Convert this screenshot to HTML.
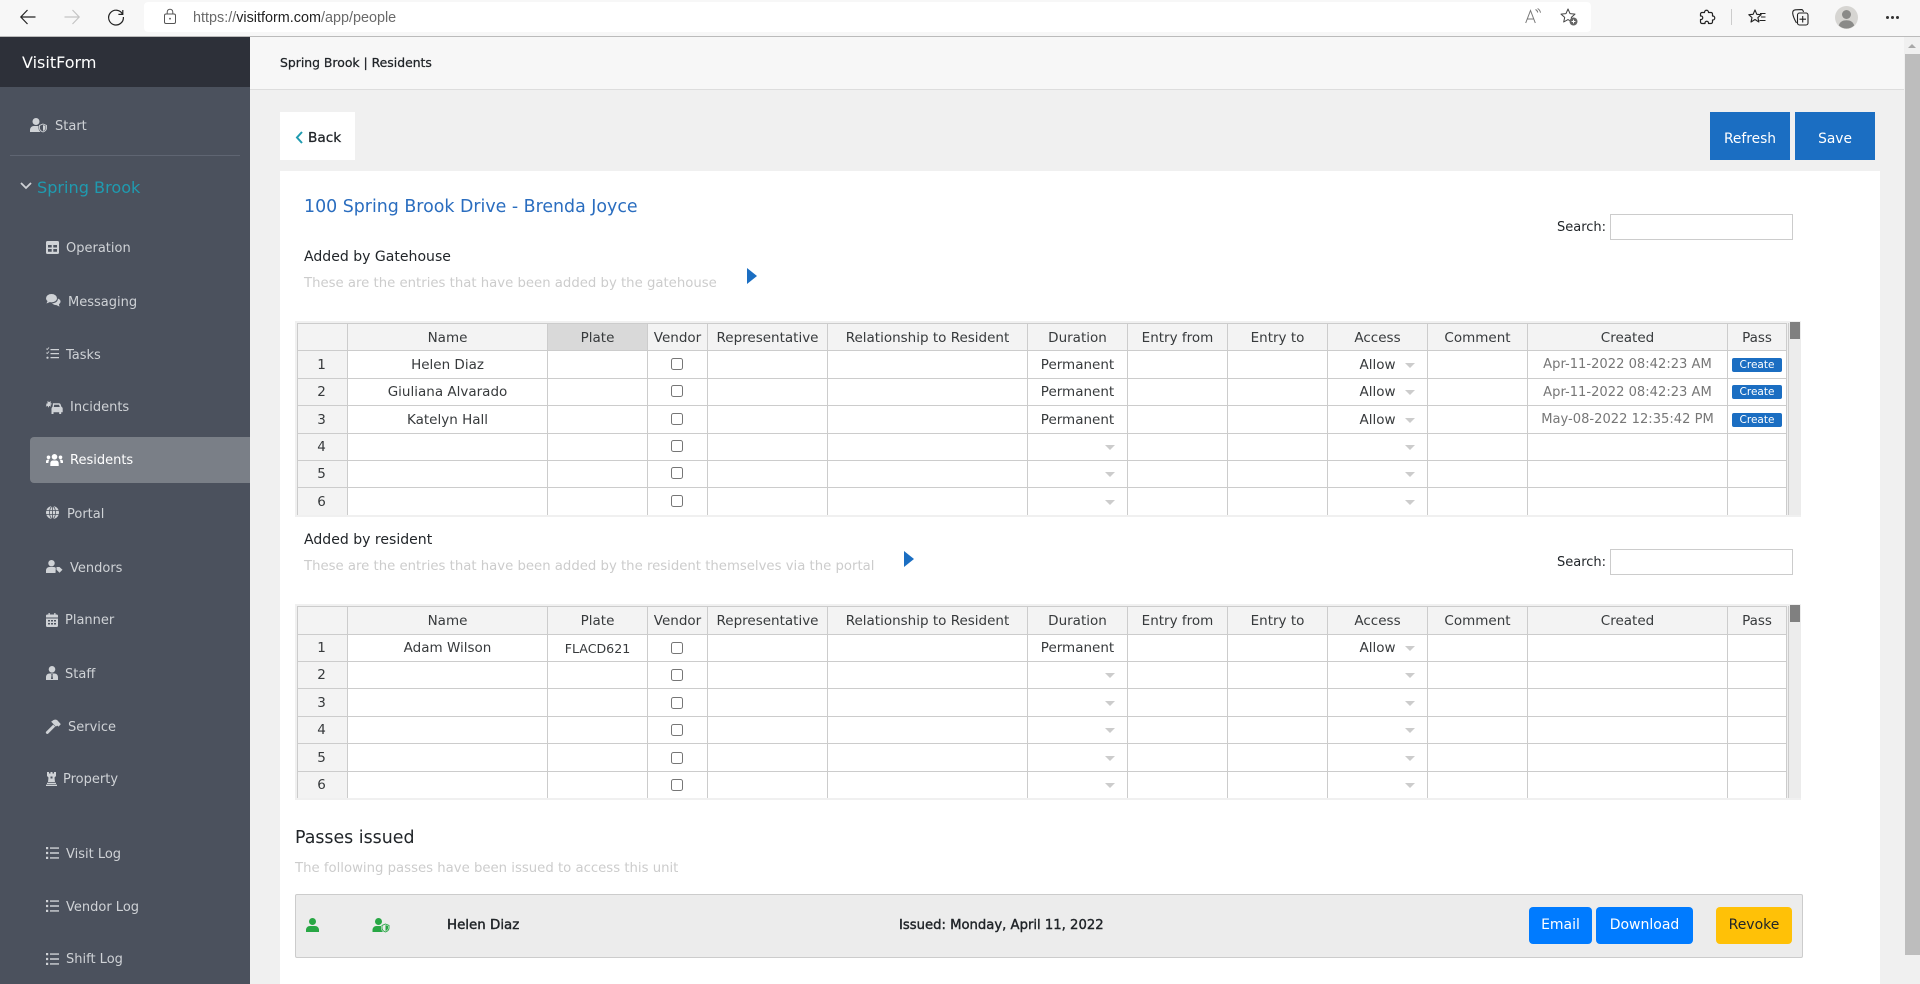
<!DOCTYPE html>
<html lang="en"><head><meta charset="utf-8"><title>VisitForm</title>
<style>
*{box-sizing:border-box}
html,body{margin:0;padding:0;width:1920px;height:984px;overflow:hidden;background:#f0f0f0;font-family:"DejaVu Sans","Liberation Sans",sans-serif;font-size:13px;color:#212529}
.b{position:absolute}
.t{position:absolute;white-space:nowrap;line-height:20px;height:20px;margin-top:1px}
svg{position:absolute;overflow:visible}
.s{color:#cfd2d6}
table{position:absolute;left:297px;width:1490px;table-layout:fixed;border-collapse:separate;border-spacing:0}
td,th{border-right:1px solid #ccc;border-bottom:1px solid #ccc;padding:0;text-align:center;font-weight:400;font-size:13.5px;color:#373a3c;overflow:hidden;position:relative;white-space:nowrap;background:#fff}
th{background:#f3f3f3}
tr:first-child th{border-top:1px solid #ccc;padding-top:1px}
tr th:first-child{border-left:1px solid #ccc;padding-right:2px}
tr:last-child td,tr:last-child th{border-bottom:0}
th.hl{background:#d9d9d9}
td input{margin:auto;width:12px;height:12px;display:block;position:relative;left:-1px}
.t1 td input{top:-1px}
i{position:absolute;right:12px;top:50%;margin-top:-2px;width:0;height:0;border-left:5px solid transparent;border-right:5px solid transparent;border-top:5px solid #ccc}
td.c{color:#777;font-size:13.1px}
.k{display:block;width:50px;height:14px;line-height:14px;margin-left:4px;background:#1b6ec2;color:#fff;font-size:10.5px;border-radius:2px}
.d{color:#ccc;font-size:13.25px}
.m{-webkit-text-stroke:.25px currentColor}
.bt{position:absolute;text-align:center;color:#fff;background:#1b6ec2}
.bs{position:absolute;top:907px;height:37px;line-height:37px;border-radius:4px;background:#007bff;color:#fff;text-align:center;font-size:14px}
.in{position:absolute;left:1610px;width:183px;height:26px;border:1px solid #ccc;background:#fff}
</style></head><body>

<!-- browser chrome -->
<div class="b" style="left:0;top:0;width:1920px;height:37px;background:#f7f7f7;border-bottom:1px solid #bbb"></div>
<div class="b" style="left:144px;top:2px;width:1447px;height:30px;background:#fff;border-radius:4px"></div>
<svg style="left:20px;top:9px" width="16" height="16" viewBox="0 0 16 16" fill="none" stroke="#222" stroke-width="1.2"><path d="M15.5 8H.8M7.5 1L.8 8l6.7 7"/></svg>
<svg style="left:64px;top:9px" width="16" height="16" viewBox="0 0 16 16" fill="none" stroke="#c4c4c4" stroke-width="1.2"><path d="M.5 8h14.7M8.5 1l6.7 7-6.7 7"/></svg>
<svg style="left:108px;top:9px" width="16" height="16" viewBox="0 0 16 16" fill="none" stroke="#222" stroke-width="1.2"><path d="M14.6 5.2A7.4 7.4 0 1 0 15.4 8M14.8 1v4.4h-4.4"/></svg>
<svg style="left:164px;top:9px" width="12" height="15" viewBox="0 0 12 15" fill="none" stroke="#555" stroke-width="1"><rect x=".5" y="5" width="11" height="9.5" rx="1.5"/><path d="M3.2 5V3a2.8 2.8 0 0 1 5.6 0v2"/><circle cx="6" cy="9.7" r=".9" fill="#555" stroke="none"/></svg>
<div class="t" style="left:193px;top:7px;font-family:'Liberation Sans',sans-serif;font-size:14.4px;color:#6a6a6a">https://<span style="color:#222">visitform.com</span>/app/people</div>
<svg style="left:1525px;top:8px" width="17" height="16" viewBox="0 0 17 16" fill="none" stroke="#777" stroke-width="1"><path d="M.7 15L5.5 2.5 10.3 15M2.4 11h6.2M10.5 1.5c1.2.6 2 1.6 2.2 3M12.6.5c1.6.9 2.6 2.4 2.9 4.2"/></svg>
<svg style="left:1560px;top:8px" width="18" height="18" viewBox="0 0 18 18" fill="none" stroke="#444" stroke-width="1"><path d="M8 1l2 4.6 5 .5-3.7 3.3 1 4.600L8 11.600 3.700 14l1-4.600L1 6.100l5-.5z" stroke-linejoin="round"/><circle cx="13.500" cy="13.500" r="4" fill="#666" stroke="none"/><path d="M11.600 13.500h3.800M13.500 11.600v3.800" stroke="#fff"/></svg>
<svg style="left:1699px;top:9px" width="16" height="17" viewBox="0 0 16 17" fill="none" stroke="#222" stroke-width="1.2"><path d="M5.500 3.500c0-3 4-3 4 0h2.500a1.500 1.500 0 0 1 1.500 1.500v2c3-.5 3 4.500 0 4v2a1.500 1.500 0 0 1-1.500 1.500H9.500c.5-3-4-3-3.500 0H3a1.500 1.500 0 0 1-1.500-1.500v-2.500c3 .5 3-4 0-3.500V5A1.500 1.500 0 0 1 3 3.500z" stroke-linejoin="round"/></svg>
<div class="b" style="left:1731px;top:9px;width:1px;height:16px;background:#ccc"></div>
<svg style="left:1748px;top:9px" width="18" height="16" viewBox="0 0 18 16" fill="none" stroke="#222" stroke-width="1.100"><path d="M7 1l1.800 4.300 4.400.4-3.300 2.900 1 4.400L7 10.500 3 13l1-4.400L.8 5.700l4.300-.4z" stroke-linejoin="round"/><path d="M12 4.500h5.500M13 8h4.500M11.500 11.500h6"/></svg>
<svg style="left:1792px;top:9px" width="17" height="17" viewBox="0 0 17 17" fill="none" stroke="#222" stroke-width="1.100"><path d="M4.500 14C2.500 10.500 1 7 .7 4.300.5 2 2 1 3.500.8L9.500.6c1 0 1.600.8 2 2.400"/><rect x="5.500" y="4" width="10.500" height="12" rx="2" fill="#f7f7f7"/><path d="M10.700 7v6.500M7.500 10.200h6.500"/></svg>
<svg style="left:1835px;top:6px" width="23" height="23" viewBox="0 0 23 23"><circle cx="11.500" cy="11.500" r="11.500" fill="#d6d5d2"/><circle cx="11.500" cy="8.500" r="4.500" fill="#8a8a88"/><path d="M3.800 19.500c1-3.700 4-5.200 7.700-5.200s6.700 1.500 7.700 5.200a11.500 11.500 0 0 1-15.400 0z" fill="#8a8a88"/></svg>
<div class="b" style="left:1886px;top:16px;width:3px;height:3px;border-radius:50%;background:#333"></div>
<div class="b" style="left:1891px;top:16px;width:3px;height:3px;border-radius:50%;background:#333"></div>
<div class="b" style="left:1896px;top:16px;width:3px;height:3px;border-radius:50%;background:#333"></div>

<!-- scrollbar -->
<div class="b" style="left:1905px;top:37px;width:15px;height:947px;background:#f0f0f0"></div>
<div class="b" style="left:1905px;top:54px;width:15px;height:901px;background:#bdbdbd"></div>
<div class="b" style="left:1908px;top:44px;width:0;height:0;border-left:4px solid transparent;border-right:4px solid transparent;border-bottom:4px solid #a8a8a8"></div>

<!-- sidebar -->
<div class="b" style="left:0;top:37px;width:250px;height:947px;background:#4b515d"></div>
<div class="b" style="left:0;top:37px;width:250px;height:50px;background:#2d3039"></div>
<div class="t" style="left:22px;top:52px;font-size:16px;color:#fff">VisitForm</div>
<div class="b" style="left:10px;top:155px;width:230px;height:1px;background:#5f6572"></div>
<div class="b" style="left:30px;top:437px;width:220px;height:46px;background:#7a7f87;border-radius:4px 0 0 4px"></div>

<svg style="left:30px;top:118px" width="17" height="14" viewBox="0 0 17 14" fill="#cfd2d6"><circle cx="6" cy="3.500" r="3.500"/><path d="M0 14v-2c0-2.300 1.800-4 4-4h4c.9 0 1.700.3 2.300.8V14z"/><path d="M13 6l3.500 1.400v2.700c0 1.900-1.400 3.100-3.500 3.900-2.100-.8-3.500-2-3.500-3.900V7.400z" fill="#4b515d" stroke="#4b515d" stroke-width="2"/><path d="M13 6l3.500 1.400v2.700c0 1.900-1.400 3.100-3.500 3.900-2.100-.8-3.500-2-3.500-3.900V7.400z" fill="#4b515d" stroke="#cfd2d6" stroke-width=".9"/><path d="M13 7v6c1.500-.7 2.500-1.600 2.500-2.900V8z"/></svg>
<div class="t s" style="left:55px;top:116px">Start</div>
<svg style="left:20px;top:182px" width="12" height="8" viewBox="0 0 12 8" fill="none" stroke="#cfd2d6" stroke-width="1.800"><path d="M1 1l5 5 5-5"/></svg>
<div class="t" style="left:37px;top:177px;font-size:16.1px;color:#1f9bb0">Spring Brook</div>

<svg style="left:46px;top:241px" width="13" height="13" viewBox="0 0 13 13"><path fill="#cfd2d6" fill-rule="evenodd" d="M1.500 0h10A1.500 1.500 0 0 1 13 1.500v10a1.500 1.500 0 0 1-1.500 1.500h-10A1.500 1.500 0 0 1 0 11.500v-10A1.500 1.500 0 0 1 1.500 0zM2 4v2.500h3.700V4zm5.300 0v2.500H11V4zM2 8v2.700h3.700V8zm5.300 0v2.700H11V8z"/></svg>
<div class="t s" style="left:66px;top:238px">Operation</div>

<svg style="left:46px;top:294px" width="15" height="13" viewBox="0 0 15 13" fill="#cfd2d6"><ellipse cx="5.500" cy="4.200" rx="5.500" ry="4.200"/><path d="M1.500 7l-1 2.500L4 8z"/><path d="M11.800 4.500C12.300 7 9.500 9.300 6 9.300c1 1.200 2.600 1.800 4.500 1.800l3 1.500-.6-2.400C15.500 8.500 15 5.500 11.800 4.500z"/></svg>
<div class="t s" style="left:68px;top:292px">Messaging</div>

<svg style="left:46px;top:347px" width="13" height="13" viewBox="0 0 13 13" fill="#cfd2d6"><path d="M4.500 2h8.500v1.300H4.500zM4.500 6h8.500v1.300H4.500zM4.500 10h8.500v1.300H4.500z"/><path d="M.4 1.700l.8.800L3 .5" fill="none" stroke="#cfd2d6" stroke-width=".9"/><path d="M.4 5.700l.8.800L3 4.500" fill="none" stroke="#cfd2d6" stroke-width=".9"/><circle cx="1.500" cy="10.700" r="1.100"/></svg>
<div class="t s" style="left:66px;top:345px">Tasks</div>

<svg style="left:46px;top:400px" width="17" height="14" viewBox="0 0 17 14" fill="#cfd2d6"><path d="M2.500 0l.6 2 2-.7-.7 2 2 .6-2 .9.7 1.800-1.900-.7-.8 1.900-.8-1.900-1.800.7.700-1.800L0 3.900l1.800-.6-.7-2 1.800.7z"/><path d="M7 3.200h6c.8 0 1.400.5 1.600 1.200l.8 2.400c.9.400 1.300 1 1.300 1.900v3.500h-1.500V14h-2v-1.800H7.500V14h-2v-5c0-1 .3-1.600 1-2.100l.5-3.700zM8.200 4.700L7.800 7h6l-.8-2.300z" fill-rule="evenodd"/></svg>
<div class="t s" style="left:70px;top:397px">Incidents</div>

<svg style="left:46px;top:454px" width="17" height="12" viewBox="0 0 17 12" fill="#fff"><circle cx="8.500" cy="2.800" r="2.800"/><circle cx="2.500" cy="3.300" r="1.800"/><circle cx="14.500" cy="3.300" r="1.800"/><path d="M4.300 12V9.500c0-2 1.200-3 2.700-3h3c1.500 0 2.700 1 2.700 3V12z"/><path d="M0 9V7.500C0 6.200.8 5.600 1.800 5.600h1.700c-.8.800-1 1.800-1.100 3.400zM17 9V7.500c0-1.300-.8-1.900-1.800-1.900h-1.700c.8.800 1 1.800 1.100 3.400z"/></svg>
<div class="t" style="left:70px;top:450px;color:#fff">Residents</div>

<svg style="left:46px;top:506px" width="13" height="13" viewBox="0 0 13 13" fill="none" stroke="#cfd2d6"><circle cx="6.500" cy="6.500" r="6.500" fill="#cfd2d6" stroke="none"/><path d="M0 4.500h13M0 8.500h13M6.500 0v13" stroke="#4b515d" stroke-width=".8"/><ellipse cx="6.500" cy="6.500" rx="3" ry="6.200" stroke="#4b515d" stroke-width=".8"/></svg>
<div class="t s" style="left:67px;top:504px">Portal</div>

<svg style="left:46px;top:560px" width="17" height="13" viewBox="0 0 17 13" fill="#cfd2d6"><circle cx="5.500" cy="3.200" r="3.200"/><path d="M0 13v-2.500C0 8.500 1.500 7 3.500 7h4c1 0 1.700.3 2.300.8L9.500 13z"/><path d="M10.500 7h3l3 2.800-3 3-3-3z"/></svg>
<div class="t s" style="left:70px;top:558px">Vendors</div>

<svg style="left:46px;top:613px" width="12" height="14" viewBox="0 0 12 14"><path fill="#cfd2d6" fill-rule="evenodd" d="M2.500 0h1.300v1.500h4.400V0h1.300v1.500h1.300c.6 0 1.200.5 1.200 1.200V4.500H0V2.700c0-.7.600-1.200 1.200-1.200h1.300zM0 5.500h12v7.300c0 .7-.6 1.200-1.200 1.200H1.200C.6 14 0 13.500 0 12.800zM2 7v1.500h2V7zm3 0v1.500h2V7zm3 0v1.500h2V7zm-6 3v1.500h2V10zm3 0v1.500h2V10zm3 0v1.500h2V10z"/></svg>
<div class="t s" style="left:65px;top:610px">Planner</div>

<svg style="left:46px;top:666px" width="12" height="14" viewBox="0 0 12 14" fill="#cfd2d6"><circle cx="6" cy="3.300" r="3.300"/><path d="M0 14v-2.800C0 9 1.500 7.500 3.500 7.500h5c2 0 3.500 1.500 3.500 3.700V14zM5.300 8l.2 1.500-.5 3.500h2l-.5-3.500L6.700 8z" fill-rule="evenodd"/></svg>
<div class="t s" style="left:65px;top:664px">Staff</div>

<svg style="left:46px;top:719px" width="15" height="15" viewBox="0 0 15 15" fill="#cfd2d6"><path d="M.2 12.600l7-7 2 2-7 7c-.5.500-1.300.500-1.800 0l-.2-.2c-.5-.5-.5-1.300 0-1.800z"/><path d="M5.800 2.500C7 .8 9.600 0 11.300 1.300l3.500 3.800-2.200 2.500-1.400-1-1.400 1-2.800-3c-.5-.7-1.100-1.300-2.200-2.100z"/></svg>
<div class="t s" style="left:68px;top:717px">Service</div>

<svg style="left:46px;top:772px" width="11" height="14" viewBox="0 0 11 14" fill="#cfd2d6"><path d="M1 0h2v1.500h1.500V0h2v1.500H8V0h2v4L8.500 5.500 9 10H2l.5-4.500L1 4zM4.500 4.500v2h2v-2z" fill-rule="evenodd"/><path d="M1 10.800h9V12H1zM0 12.600h11V14H0z"/></svg>
<div class="t s" style="left:63px;top:769px">Property</div>

<svg style="left:46px;top:847px" width="13" height="12" viewBox="0 0 13 12" fill="#cfd2d6"><path d="M0 0h2.200v2.200H0zM0 4.900h2.200v2.200H0zM0 9.800h2.200V12H0zM4 .4h9v1.400H4zM4 5.300h9v1.400H4zM4 10.200h9v1.400H4z"/></svg>
<div class="t s" style="left:66px;top:844px">Visit Log</div>
<svg style="left:46px;top:900px" width="13" height="12" viewBox="0 0 13 12" fill="#cfd2d6"><path d="M0 0h2.200v2.200H0zM0 4.900h2.200v2.200H0zM0 9.800h2.200V12H0zM4 .4h9v1.400H4zM4 5.300h9v1.400H4zM4 10.200h9v1.400H4z"/></svg>
<div class="t s" style="left:66px;top:897px">Vendor Log</div>
<svg style="left:46px;top:953px" width="13" height="12" viewBox="0 0 13 12" fill="#cfd2d6"><path d="M0 0h2.200v2.200H0zM0 4.900h2.200v2.200H0zM0 9.800h2.200V12H0zM4 .4h9v1.400H4zM4 5.300h9v1.400H4zM4 10.200h9v1.400H4z"/></svg>
<div class="t s" style="left:66px;top:949px">Shift Log</div>

<!-- top bar -->
<div class="b" style="left:250px;top:37px;width:1654px;height:53px;background:#f7f7f7;border-bottom:1px solid #ddd"></div>
<div class="t m" style="left:280px;top:52px;font-size:12.4px;color:#212529">Spring Brook | Residents</div>

<!-- action row -->
<div class="b" style="left:280px;top:112px;width:75px;height:48px;background:#fff"></div>
<svg style="left:296px;top:131px" width="7" height="13" viewBox="0 0 7 13" fill="none" stroke="#1f9bb0" stroke-width="2"><path d="M6 1L1 6.500 6 12"/></svg>
<div class="t m" style="left:308px;top:127px;font-size:13.7px;color:#212529">Back</div>
<div class="bt" style="left:1710px;top:112px;width:80px;height:48px;line-height:54px;font-size:13.8px">Refresh</div>
<div class="bt" style="left:1795px;top:112px;width:80px;height:48px;line-height:54px;font-size:13.8px">Save</div>

<!-- card -->
<div class="b" style="left:280px;top:171px;width:1600px;height:813px;background:#fff"></div>
<div class="t" style="left:304px;top:196px;font-size:17.4px;color:#2a6dbf">100 Spring Brook Drive - Brenda Joyce</div>
<div class="t" style="left:304px;top:246px;font-size:14.05px;color:#212529">Added by Gatehouse</div>
<div class="t d" style="left:304px;top:273px">These are the entries that have been added by the gatehouse</div>
<div class="b" style="left:747px;top:268px;width:0;height:0;border-top:8px solid transparent;border-bottom:8px solid transparent;border-left:10px solid #1b6ec2"></div>
<div class="t" style="left:1557px;top:217px;font-size:13px;color:#212529">Search:</div>
<div class="in" style="top:214px"></div>

<!-- table 1 -->
<div class="b" style="left:295px;top:321px;width:1506px;height:196px;background:#f0f0f0"></div>
<div class="b" style="left:1788px;top:323px;width:13px;height:192px;background:#ececec;border-left:1px solid #ccc"></div>
<div class="b" style="left:1790px;top:322px;width:10px;height:17px;background:#808080"></div>
<table class="t1" style="top:323px"><colgroup><col style="width:51px"><col style="width:200px"><col style="width:100px"><col style="width:60px"><col style="width:120px"><col style="width:200px"><col style="width:100px"><col style="width:100px"><col style="width:100px"><col style="width:100px"><col style="width:100px"><col style="width:200px"><col style="width:59px"></colgroup>
<tr style="height:28px"><th></th><th>Name</th><th class="hl">Plate</th><th>Vendor</th><th>Representative</th><th>Relationship to Resident</th><th>Duration</th><th>Entry from</th><th>Entry to</th><th>Access</th><th>Comment</th><th>Created</th><th>Pass</th></tr>
<tr style="height:28px"><th>1</th><td>Helen Diaz</td><td></td><td><input type="checkbox"></td><td></td><td></td><td>Permanent</td><td></td><td></td><td>Allow<i></i></td><td></td><td class="c">Apr-11-2022 08:42:23 AM</td><td><span class="k">Create</span></td></tr>
<tr style="height:27px"><th>2</th><td>Giuliana Alvarado</td><td></td><td><input type="checkbox"></td><td></td><td></td><td>Permanent</td><td></td><td></td><td>Allow<i></i></td><td></td><td class="c">Apr-11-2022 08:42:23 AM</td><td><span class="k">Create</span></td></tr>
<tr style="height:28px"><th>3</th><td>Katelyn Hall</td><td></td><td><input type="checkbox"></td><td></td><td></td><td>Permanent</td><td></td><td></td><td>Allow<i></i></td><td></td><td class="c">May-08-2022 12:35:42 PM</td><td><span class="k">Create</span></td></tr>
<tr style="height:27px"><th>4</th><td></td><td></td><td><input type="checkbox"></td><td></td><td></td><td><i></i></td><td></td><td></td><td><i></i></td><td></td><td></td><td></td></tr>
<tr style="height:27px"><th>5</th><td></td><td></td><td><input type="checkbox"></td><td></td><td></td><td><i></i></td><td></td><td></td><td><i></i></td><td></td><td></td><td></td></tr>
<tr style="height:27px"><th>6</th><td></td><td></td><td><input type="checkbox"></td><td></td><td></td><td><i></i></td><td></td><td></td><td><i></i></td><td></td><td></td><td></td></tr>
</table>

<div class="t" style="left:304px;top:529px;font-size:14.05px;color:#212529">Added by resident</div>
<div class="t d" style="left:304px;top:556px">These are the entries that have been added by the resident themselves via the portal</div>
<div class="b" style="left:904px;top:551px;width:0;height:0;border-top:8px solid transparent;border-bottom:8px solid transparent;border-left:10px solid #1b6ec2"></div>
<div class="t" style="left:1557px;top:552px;font-size:13px;color:#212529">Search:</div>
<div class="in" style="top:549px"></div>

<!-- table 2 -->
<div class="b" style="left:295px;top:604px;width:1506px;height:196px;background:#f0f0f0"></div>
<div class="b" style="left:1788px;top:606px;width:13px;height:192px;background:#ececec;border-left:1px solid #ccc"></div>
<div class="b" style="left:1790px;top:605px;width:10px;height:17px;background:#808080"></div>
<table style="top:606px"><colgroup><col style="width:51px"><col style="width:200px"><col style="width:100px"><col style="width:60px"><col style="width:120px"><col style="width:200px"><col style="width:100px"><col style="width:100px"><col style="width:100px"><col style="width:100px"><col style="width:100px"><col style="width:200px"><col style="width:59px"></colgroup>
<tr style="height:29px"><th></th><th>Name</th><th>Plate</th><th>Vendor</th><th>Representative</th><th>Relationship to Resident</th><th>Duration</th><th>Entry from</th><th>Entry to</th><th>Access</th><th>Comment</th><th>Created</th><th>Pass</th></tr>
<tr style="height:27px"><th>1</th><td>Adam Wilson</td><td style="font-size:12.6px">FLACD621</td><td><input type="checkbox"></td><td></td><td></td><td>Permanent</td><td></td><td></td><td>Allow<i></i></td><td></td><td></td><td></td></tr>
<tr style="height:27px"><th>2</th><td></td><td></td><td><input type="checkbox"></td><td></td><td></td><td><i></i></td><td></td><td></td><td><i></i></td><td></td><td></td><td></td></tr>
<tr style="height:28px"><th>3</th><td></td><td></td><td><input type="checkbox"></td><td></td><td></td><td><i></i></td><td></td><td></td><td><i></i></td><td></td><td></td><td></td></tr>
<tr style="height:27px"><th>4</th><td></td><td></td><td><input type="checkbox"></td><td></td><td></td><td><i></i></td><td></td><td></td><td><i></i></td><td></td><td></td><td></td></tr>
<tr style="height:28px"><th>5</th><td></td><td></td><td><input type="checkbox"></td><td></td><td></td><td><i></i></td><td></td><td></td><td><i></i></td><td></td><td></td><td></td></tr>
<tr style="height:26px"><th>6</th><td></td><td></td><td><input type="checkbox"></td><td></td><td></td><td><i></i></td><td></td><td></td><td><i></i></td><td></td><td></td><td></td></tr>
</table>

<!-- passes -->
<div class="t" style="left:295px;top:827px;font-size:17.4px;color:#212529">Passes issued</div>
<div class="t d" style="left:295px;top:858px">The following passes have been issued to access this unit</div>
<div class="b" style="left:295px;top:894px;width:1508px;height:64px;background:#ececec;border:1px solid #ccc;border-radius:2px"></div>
<svg style="left:306px;top:918px" width="13" height="14" viewBox="0 0 13 14" fill="#28a745"><circle cx="6.500" cy="3.500" r="3.500"/><path d="M0 14v-2c0-2.300 1.700-4 4-4h5c2.300 0 4 1.700 4 4v2z"/></svg>
<svg style="left:372px;top:918px" width="18" height="14" viewBox="0 0 17 14" fill="#28a745"><circle cx="6" cy="3.500" r="3.500"/><path d="M0 14v-2c0-2.300 1.800-4 4-4h4c.9 0 1.700.3 2.300.8V14z"/><path d="M13 6l3.500 1.400v2.700c0 1.900-1.400 3.100-3.500 3.900-2.100-.8-3.500-2-3.500-3.900V7.400z" fill="#ececec" stroke="#ececec" stroke-width="2"/><path d="M13 6l3.500 1.400v2.700c0 1.900-1.400 3.100-3.500 3.900-2.100-.8-3.500-2-3.500-3.900V7.400z" fill="#ececec" stroke="#28a745" stroke-width=".9"/><path d="M13 7v6c1.500-.7 2.500-1.600 2.500-2.900V8z"/></svg>
<div class="t m" style="left:447px;top:915px;font-size:13.4px;-webkit-text-stroke:.4px #212529;color:#212529">Helen Diaz</div>
<div class="t m" style="left:899px;top:915px;font-size:13.2px;-webkit-text-stroke:.4px #212529;color:#212529">Issued: Monday, April 11, 2022</div>
<div class="bs" style="left:1529px;width:63px">Email</div>
<div class="bs" style="left:1596px;width:97px">Download</div>
<div class="bs" style="left:1716px;width:76px;background:#ffc107;color:#212529">Revoke</div>

</body></html>
